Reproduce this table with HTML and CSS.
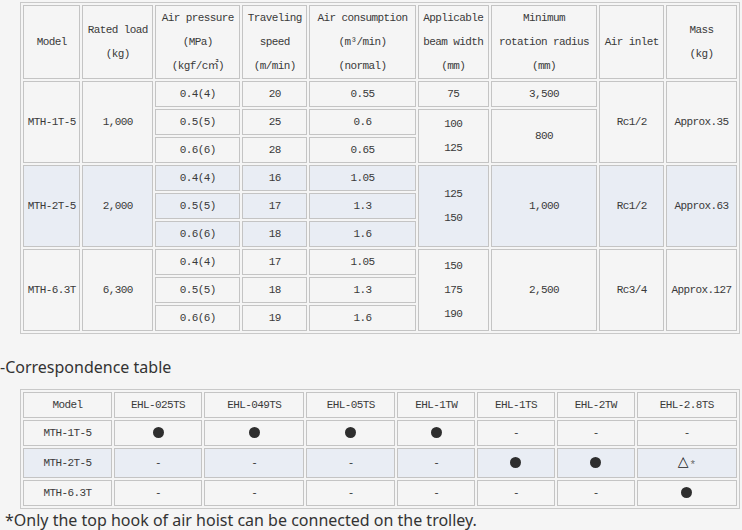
FILE: index.html
```html
<!DOCTYPE html>
<html>
<head>
<meta charset="utf-8">
<link rel="stylesheet" href="styles.css">
</head>
<body>
<table class="spec">
  <colgroup>
    <col class="w56"><col class="w69"><col class="w83"><col class="w63"><col class="w104"><col class="w69"><col class="w104"><col class="w63"><col class="w69">
  </colgroup>
  <tr class="head">
    <td>Model</td>
    <td>Rated load<br>(kg)</td>
    <td>Air pressure<br>(MPa)<br>(kgf/c㎡)</td>
    <td>Traveling<br>speed<br>(m/min)</td>
    <td>Air consumption<br>(m³/min)<br>(normal)</td>
    <td>Applicable<br>beam width<br>(mm)</td>
    <td>Minimum<br>rotation radius<br>(mm)</td>
    <td>Air inlet</td>
    <td>Mass<br>(kg)</td>
  </tr>
  <tr>
    <td rowspan="3">MTH-1T-5</td>
    <td rowspan="3">1,000</td>
    <td>0.4(4)</td>
    <td>20</td>
    <td>0.55</td>
    <td>75</td>
    <td>3,500</td>
    <td rowspan="3">Rc1/2</td>
    <td rowspan="3">Approx.35</td>
  </tr>
  <tr>
    <td>0.5(5)</td>
    <td>25</td>
    <td>0.6</td>
    <td rowspan="2">100<br>125</td>
    <td rowspan="2">800</td>
  </tr>
  <tr>
    <td>0.6(6)</td>
    <td>28</td>
    <td>0.65</td>
  </tr>
  <tr class="alt">
    <td rowspan="3">MTH-2T-5</td>
    <td rowspan="3">2,000</td>
    <td>0.4(4)</td>
    <td>16</td>
    <td>1.05</td>
    <td rowspan="3">125<br>150</td>
    <td rowspan="3">1,000</td>
    <td rowspan="3">Rc1/2</td>
    <td rowspan="3">Approx.63</td>
  </tr>
  <tr class="alt">
    <td>0.5(5)</td>
    <td>17</td>
    <td>1.3</td>
  </tr>
  <tr class="alt">
    <td>0.6(6)</td>
    <td>18</td>
    <td>1.6</td>
  </tr>
  <tr>
    <td rowspan="3">MTH-6.3T</td>
    <td rowspan="3">6,300</td>
    <td>0.4(4)</td>
    <td>17</td>
    <td>1.05</td>
    <td rowspan="3">150<br>175<br>190</td>
    <td rowspan="3">2,500</td>
    <td rowspan="3">Rc3/4</td>
    <td rowspan="3">Approx.127</td>
  </tr>
  <tr>
    <td>0.5(5)</td>
    <td>18</td>
    <td>1.3</td>
  </tr>
  <tr>
    <td>0.6(6)</td>
    <td>19</td>
    <td>1.6</td>
  </tr>
</table>

<p class="title">-Correspondence table</p>

<table class="corr">
  <colgroup>
    <col class="w87"><col class="w86"><col class="w98"><col class="w87"><col class="w76"><col class="w76"><col class="w76"><col class="w98">
  </colgroup>
  <tr>
    <td>Model</td><td>EHL-025TS</td><td>EHL-049TS</td><td>EHL-05TS</td><td>EHL-1TW</td><td>EHL-1TS</td><td>EHL-2TW</td><td>EHL-2.8TS</td>
  </tr>
  <tr>
    <td>MTH-1T-5</td>
    <td><span class="dot"></span></td>
    <td><span class="dot"></span></td>
    <td><span class="dot"></span></td>
    <td><span class="dot"></span></td>
    <td>-</td><td>-</td><td>-</td>
  </tr>
  <tr class="alt">
    <td>MTH-2T-5</td>
    <td>-</td><td>-</td><td>-</td><td>-</td>
    <td><span class="dot"></span></td>
    <td><span class="dot"></span></td>
    <td><span class="tri">△</span><span class="ast">*</span></td>
  </tr>
  <tr>
    <td>MTH-6.3T</td>
    <td>-</td><td>-</td><td>-</td><td>-</td><td>-</td><td>-</td>
    <td><span class="dot"></span></td>
  </tr>
</table>

<p class="note">*Only the top hook of air hoist can be connected on the trolley.</p>
</body>
</html>
```

FILE: styles.css
```css
html, body {
  margin: 0;
  padding: 0;
  background: #f5f5f5;
}

body {
  color: #333;
  font-family: "Noto Sans", "Open Sans", sans-serif;
}

table {
  border-collapse: separate;
  border-spacing: 2px;
  border: 1px solid #c9c9c9;
  table-layout: fixed;
  width: 720px;
  margin-left: 20px;
  font-family: "Liberation Mono", "Noto Sans CJK SC", monospace;
  font-size: 11px;
  letter-spacing: -0.6px;
  color: #3a3a3a;
}

.spec {
  margin-top: 2px;
}

td {
  border: 1px solid #c4c4c4;
  padding: 0;
  text-align: center;
  vertical-align: middle;
  line-height: 24px;
  background: #f5f5f5;
  white-space: nowrap;
  overflow: hidden;
}

tr.alt td {
  background: #e9edf4;
}

.w56 { width: 56px; }
.w63 { width: 63px; }
.w69 { width: 69px; }
.w83 { width: 83px; }
.w104 { width: 104px; }
.w76 { width: 76px; }
.w86 { width: 86px; }
.w87 { width: 87px; }
.w98 { width: 98px; }

.title {
  margin: 21px 0 10px 0;
  font-size: 16px;
  line-height: 24px;
  color: #333;
}

.note {
  margin: 0;
  padding-left: 5px;
  font-size: 16px;
  line-height: 22px;
  color: #333;
}

.dot {
  display: inline-block;
  width: 11px;
  height: 11px;
  border-radius: 50%;
  background: #2e2e2e;
  vertical-align: middle;
  margin-top: -2px;
}

.tri {
  font-family: "DejaVu Sans", sans-serif;
  font-size: 14px;
  letter-spacing: 0;
  color: #222;
}

.ast {
  font-size: 11px;
  color: #6a6a6a;
  letter-spacing: 0;
  margin-left: 1px;
  vertical-align: -2px;
}
```
